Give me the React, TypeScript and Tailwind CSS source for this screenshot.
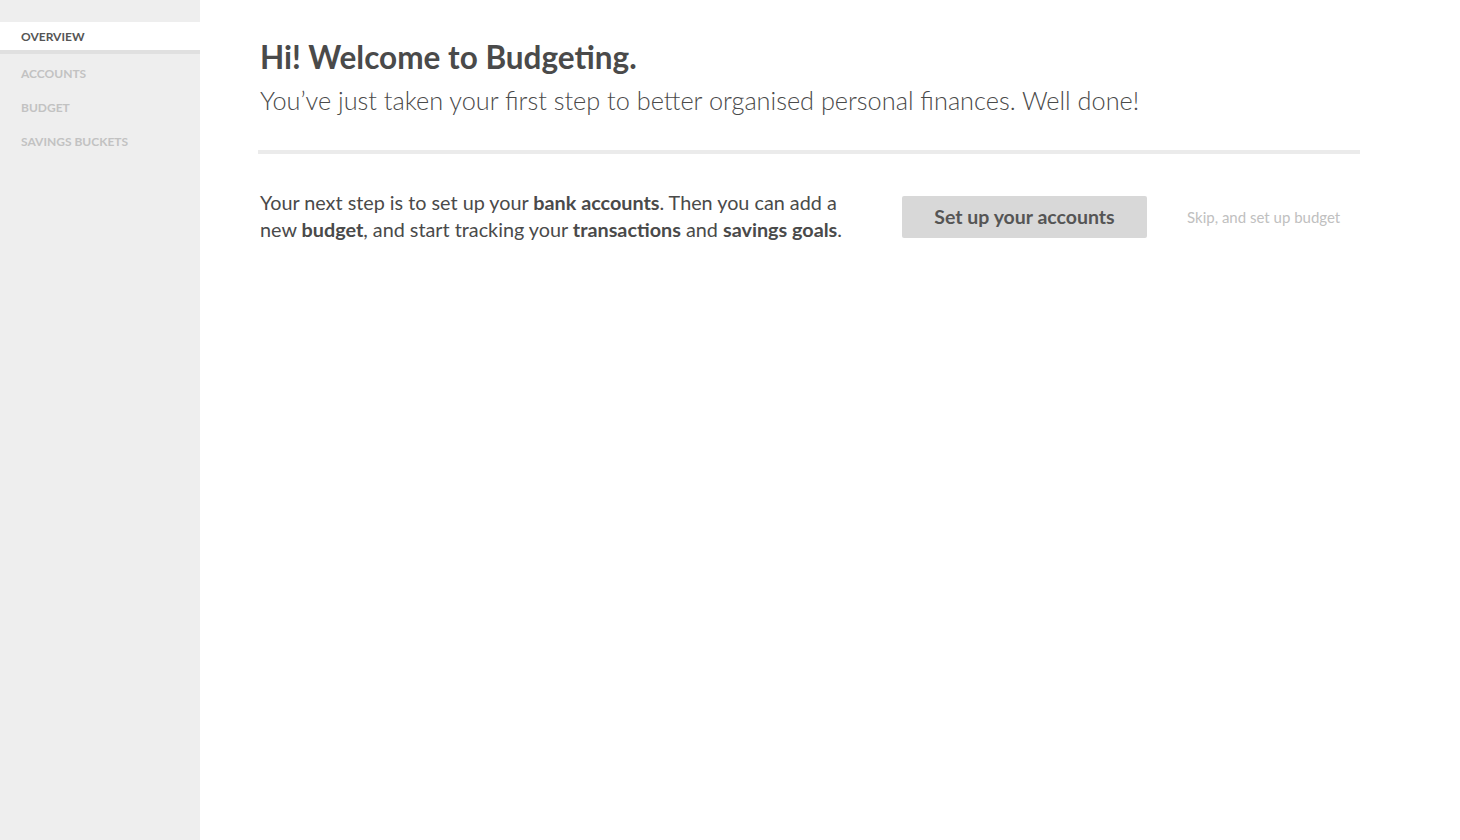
const font = 'font-["Lato","Noto_Sans",sans-serif]';

const navItems = [
  { label: 'Overview', active: true },
  { label: 'Accounts', active: false },
  { label: 'Budget', active: false },
  { label: 'Savings buckets', active: false },
];

function Sidebar() {
  return (
    <aside className="w-[200px] shrink-0 bg-[#eeeeee] pt-[22px]">
      <nav className="flex flex-col">
        {navItems.map((item) =>
          item.active ? (
            <a
              key={item.label}
              className="flex h-[32px] items-center border-b-4 border-[#e0e0e0] bg-white pl-[21px] pt-[2px] text-[12px] font-bold uppercase text-[#555555]"
            >
              {item.label}
            </a>
          ) : (
            <a
              key={item.label}
              className="flex h-[34px] items-center pl-[21px] pt-[6px] text-[12px] font-bold uppercase text-[#c2c2c2]"
            >
              {item.label}
            </a>
          ),
        )}
      </nav>
    </aside>
  );
}

export default function App() {
  return (
    <div className={`flex h-[840px] w-full bg-white ${font}`}>
      <Sidebar />
      <main className="flex-1 pl-[60px] pr-[100px] pt-[37px]">
        <h1 className="text-[31.5px] font-bold leading-[40px] text-[#4a4a4a]">
          Hi! Welcome to Budgeting.
        </h1>
        <p className="mt-[7px] text-[25.3px] font-light leading-[32px] text-[#4a4a4a]">
          You’ve just taken your first step to better organised personal finances. Well done!
        </p>
        <hr className="-ml-[2px] mt-[34px] h-[4px] border-0 bg-[#ebebeb]" />
        <div className="mt-[35px] flex items-start">
          <p className="w-[600px] text-[19.8px] font-normal leading-[27px] text-[#4a4a4a]">
            Your next step is to set up your <b className="font-bold">bank accounts</b>. Then you
            can add a new <b className="font-bold">budget</b>, and start tracking your{' '}
            <b className="font-bold">transactions</b> and <b className="font-bold">savings goals</b>.
          </p>
          <button className="ml-[42px] mt-[7px] h-[42px] w-[245px] rounded-[2px] bg-[#d8d8d8] text-[19.5px] font-bold text-[#555555]">
            Set up your accounts
          </button>
          <a className="ml-[40px] mt-[17px] text-[15px] font-normal text-[#c0c0c0]">
            Skip, and set up budget
          </a>
        </div>
      </main>
    </div>
  );
}
